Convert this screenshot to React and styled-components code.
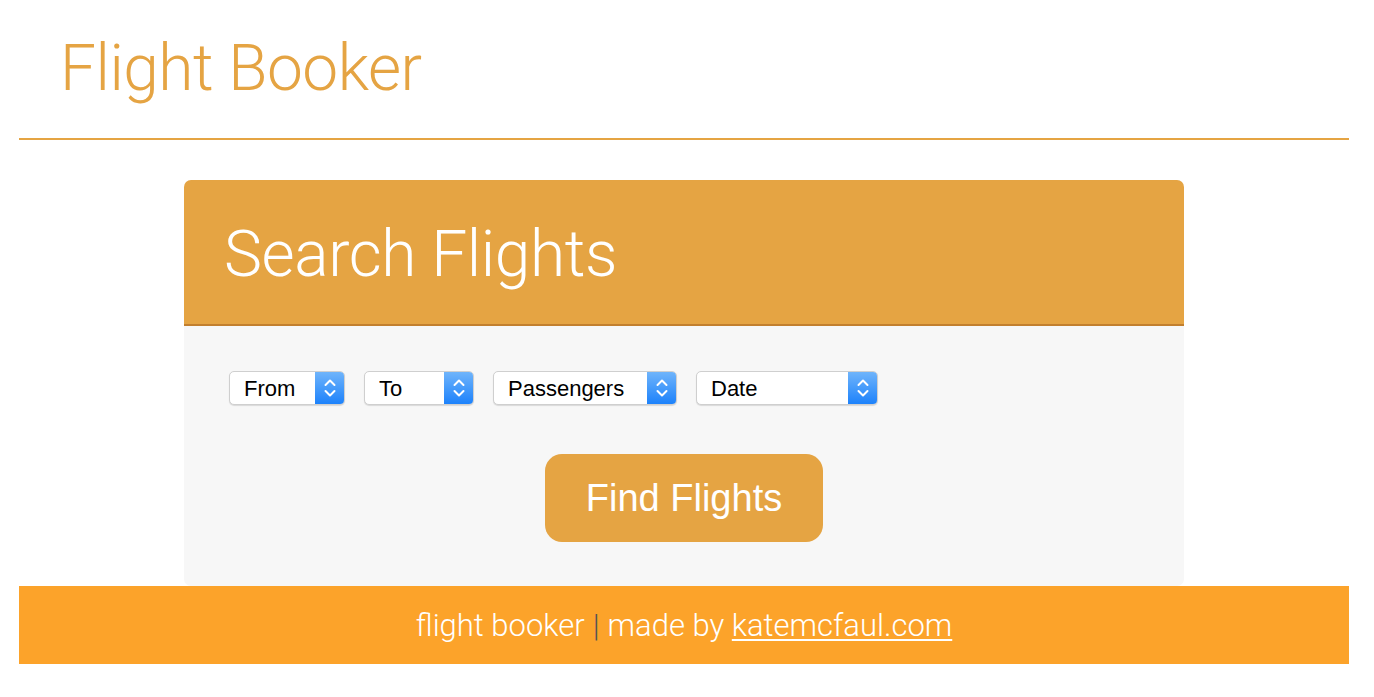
import React from "react";
import styled, { createGlobalStyle } from "styled-components";

const Global = createGlobalStyle`
  html, body { margin: 0; padding: 0; background: #ffffff; }
  body { font-family: Roboto, "Liberation Sans", Arial, sans-serif; }
`;

const Page = styled.div`
  padding: 0 25px 0 19px;
`;

const Header = styled.header`
  box-sizing: border-box;
  height: 140px;
  border-bottom: 2px solid #e5a443;
  padding-left: 41px;
  display: flex;
  align-items: flex-start;
`;

const Title = styled.h1`
  margin: 0;
  padding-top: 37px;
  font-family: Roboto, "Liberation Sans", sans-serif;
  font-weight: 300;
  font-size: 64px;
  line-height: 1;
  color: #e5a443;
  letter-spacing: -0.5px;
`;

const Main = styled.main`
  display: flex;
  justify-content: center;
  padding-top: 40px;
`;

const Card = styled.section`
  width: 1000px;
  border-radius: 7px;
  overflow: hidden;
  background: #f7f7f7;
`;

const CardHead = styled.div`
  height: 144px;
  background: #e5a443;
  border-bottom: 2px solid #c27f2e;
  padding-left: 40px;
  display: flex;
  align-items: flex-start;
`;

const CardTitle = styled.h2`
  margin: 0;
  padding-top: 43px;
  font-family: Roboto, "Liberation Sans", sans-serif;
  font-weight: 300;
  font-size: 64px;
  line-height: 1;
  color: #ffffff;
  letter-spacing: -0.4px;
`;

const CardBody = styled.div`
  padding: 45px 45px 44px;
  display: flex;
  flex-direction: column;
`;

const SelectRow = styled.div`
  display: flex;
  gap: 19px;
`;

const SelectShell = styled.label`
  display: inline-flex;
  width: ${(p) => p.$w}px;
  height: 34px;
  box-sizing: border-box;
  background: #ffffff;
  border: 1px solid #cfcfcf;
  border-radius: 5px;
  box-shadow: 0 1px 1px rgba(0, 0, 0, 0.12);
  overflow: hidden;
`;

const NativeSelect = styled.select`
  appearance: none;
  -webkit-appearance: none;
  flex: 1;
  min-width: 0;
  border: 0;
  background: transparent;
  padding: 0 0 0 14px;
  margin: 0;
  font-family: "Liberation Sans", Arial, sans-serif;
  font-size: 22px;
  color: #000000;
  outline: none;
`;

const ArrowBox = styled.span`
  width: 29px;
  flex: none;
  background: linear-gradient(#6fb4fb, #1d82fb);
  display: flex;
  align-items: center;
  justify-content: center;
`;

const ButtonRow = styled.div`
  display: flex;
  justify-content: center;
  padding-top: 49px;
`;

const FindButton = styled.button`
  width: 278px;
  height: 88px;
  border: 0;
  border-radius: 17px;
  background: #e5a443;
  color: #ffffff;
  font-family: "Liberation Sans", Arial, sans-serif;
  font-size: 38px;
  padding: 0;
  cursor: pointer;
`;

const Footer = styled.footer`
  height: 78px;
  background: #fca32a;
  display: flex;
  align-items: center;
  justify-content: center;
  font-family: Roboto, "Liberation Sans", sans-serif;
  font-weight: 300;
  font-size: 31px;
  color: #ffffff;
`;

const Pipe = styled.span`
  color: #555555;
  margin: 0 8px;
`;

const FooterLink = styled.a`
  color: #ffffff;
  text-decoration: underline;
  text-underline-offset: 3px;
  text-decoration-thickness: 2px;
`;

const Chevrons = () => (
  <svg width="14" height="22" viewBox="0 0 14 22" fill="none">
    <path d="M2.5 8 L7 3.5 L11.5 8" stroke="#fff" strokeWidth="2" strokeLinecap="round" strokeLinejoin="round" />
    <path d="M2.5 14 L7 18.5 L11.5 14" stroke="#fff" strokeWidth="2" strokeLinecap="round" strokeLinejoin="round" />
  </svg>
);

const Select = ({ label, width }) => (
  <SelectShell $w={width}>
    <NativeSelect defaultValue="">
      <option value="">{label}</option>
    </NativeSelect>
    <ArrowBox>
      <Chevrons />
    </ArrowBox>
  </SelectShell>
);

export default function App() {
  return (
    <>
      <Global />
      <Page>
        <Header>
          <Title>Flight Booker</Title>
        </Header>
        <Main>
          <Card>
            <CardHead>
              <CardTitle>Search Flights</CardTitle>
            </CardHead>
            <CardBody>
              <SelectRow>
                <Select label="From" width={116} />
                <Select label="To" width={110} />
                <Select label="Passengers" width={184} />
                <Select label="Date" width={182} />
              </SelectRow>
              <ButtonRow>
                <FindButton>Find Flights</FindButton>
              </ButtonRow>
            </CardBody>
          </Card>
        </Main>
        <Footer>
          <span>flight booker</span>
          <Pipe>|</Pipe>
          <span>
            made by <FooterLink href="#">katemcfaul.com</FooterLink>
          </span>
        </Footer>
      </Page>
    </>
  );
}
